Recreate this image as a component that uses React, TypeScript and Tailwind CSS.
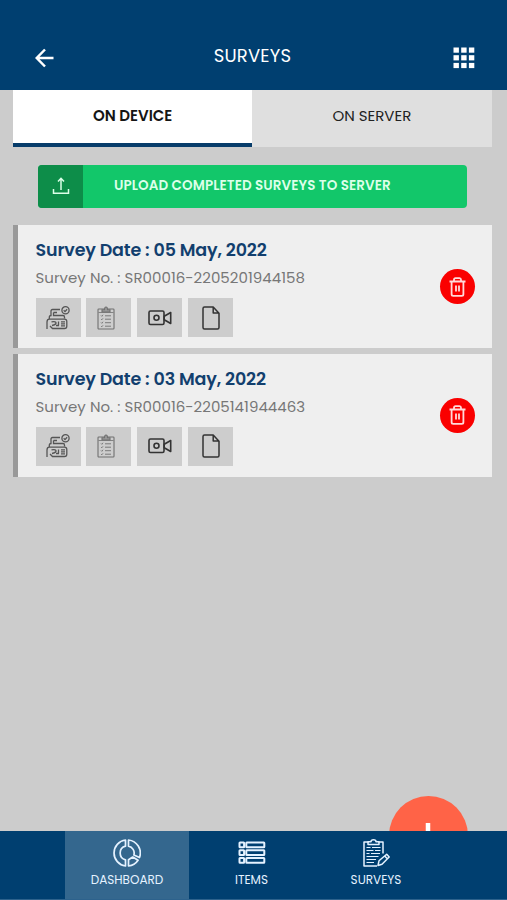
import type { ReactNode } from 'react'

const surveys = [
  { date: '05 May, 2022', number: 'SR00016-2205201944158' },
  { date: '03 May, 2022', number: 'SR00016-2205141944463' },
]

function BackIcon() {
  return (
    <svg width="20" height="20" viewBox="0 0 20 20" fill="none" stroke="currentColor" strokeWidth="2.5">
      <path d="M18.5 10H2M10 1.5 1.7 10l8.3 8.5" />
    </svg>
  )
}

function GridIcon() {
  return (
    <svg width="22" height="22" viewBox="0 0 22 22" fill="currentColor">
      {[0.5, 8.2, 15.9].map((y) =>
        [0.5, 8.2, 15.9].map((x) => <rect key={`${x}-${y}`} x={x} y={y} width="5.4" height="5.2" />),
      )}
    </svg>
  )
}

function UploadIcon() {
  return (
    <svg width="18" height="18" viewBox="0 0 18 18" fill="none" stroke="currentColor" strokeWidth="1.5">
      <path d="M1.5 12v4.2h15V12M9 13V1.5M6 4.5l3-3.2 3 3.2" />
    </svg>
  )
}

function AgreementIcon() {
  return (
    <svg width="24" height="24" viewBox="0 0 24 24" fill="none" stroke="#555" strokeWidth="1.3">
      <circle cx="19.5" cy="4.3" r="3.6" />
      <path d="m17.7 4.3 1.3 1.3 2.1-2.4" />
      <path d="M14 3.5H6.500Q5 3.500 5 5v4.500Q3.300 9.500 3.300 11.500V13M7.500 6.500H11M7.500 6.500v3h9.500q1.500 0 1.500 1.500v1.500" />
      <path d="M1 23v-7q0-2.800 2.500-2.800h15q2.300 0 2.300 2.300v4.700q0 2.300-2.300 2.300H6.500L4 20" />
      <path d="M5.500 15.800q5-.8 4.500 1.500-.5 1.700-4 2.200M12.500 15.500v4M10 19.500h3M15 15.800h4M15 17.800h4M15 19.800h4" />
    </svg>
  )
}

function ChecklistIcon() {
  return (
    <svg width="18" height="24" viewBox="0 0 18 24" fill="none" stroke="#707070" strokeWidth="1.100">
      <rect x="1" y="3" width="16" height="20" rx="0.8" />
      <path d="M1.500 6.500h15" strokeWidth="0.800" />
      <path d="M5 6V3.800h2.500Q7.500 1 9 1t1.500 2.800H13V6z" fill="#999" />
      <path d="m4 9.500.8.8L6 8.800M4 13l.8.8L6 12.300M4 16.500l.8.8L6 15.800M4 20l.8.8L6 19.300M8 9.800h6M8 13.200h6M8 16.700h6M8 20.200h6" strokeWidth="0.900" />
    </svg>
  )
}

function VideoIcon() {
  return (
    <svg width="24" height="16" viewBox="0 0 24 16" fill="none" stroke="#333" strokeWidth="1.600" strokeLinejoin="round">
      <rect x="1" y="1" width="15" height="13.500" rx="1.500" />
      <circle cx="8.500" cy="7.800" r="2.500" />
      <path d="M16.200 6.300 22.700 2.500v11l-6.500-3.800z" />
    </svg>
  )
}

function FileIcon() {
  return (
    <svg width="18" height="24" viewBox="0 0 18 24" fill="none" stroke="#333" strokeWidth="1.500" strokeLinejoin="round">
      <path d="M2.500 1h8.700L17 7.200V21.500Q17 23 15.500 23h-13Q1 23 1 21.500v-19Q1 1 2.500 1zM11.200 1v6H17" />
    </svg>
  )
}

function TrashIcon() {
  return (
    <svg width="17" height="20" viewBox="0 0 17 20" fill="none" stroke="currentColor" strokeWidth="1.800">
      <path d="M.5 4.500h16M5 4.200V2.800Q5 1.200 6.500 1.200h4q1.500 0 1.500 1.600V4.200M2.600 4.700v12.500q0 1.600 1.600 1.600h8.600q1.600 0 1.600-1.600V4.700M7 8.500v6M10 8.500v6" />
    </svg>
  )
}

function DashboardIcon() {
  return (
    <svg width="28" height="28" viewBox="0 0 28 28" fill="none" stroke="currentColor" strokeWidth="1.700" strokeLinejoin="round">
      <path d="M12.500 1v6.200a7 7 0 0 0 0 13.600V27A13.100 13.100 0 0 1 12.500 1z" />
      <path d="M15.500 1v6.200a7 7 0 0 1 5.400 8.800l5.600 2.500A13.100 13.100 0 0 0 15.500 1z" />
      <path d="M15.500 27v-6.200l4.200-2.800 5.400 3.300A13.500 13.500 0 0 1 15.500 27z" />
    </svg>
  )
}

function ItemsIcon() {
  return (
    <svg width="28" height="24" viewBox="0 0 28 24" fill="none" stroke="currentColor" strokeWidth="2">
      {[1.500, 9.200, 16.900].map((y) => (
        <g key={y}>
          <rect x="1.500" y={y} width="4.600" height="4.800" rx=".5" />
          <rect x="8.300" y={y} width="18" height="4.800" rx=".5" />
        </g>
      ))}
    </svg>
  )
}

function SurveysIcon() {
  return (
    <svg width="28" height="28" viewBox="0 0 28 28" fill="none" stroke="currentColor" strokeWidth="1.500" strokeLinejoin="round">
      <path d="M6.500 3H2v24h13M16.500 3H21v11.500" />
      <path d="M6 5.500V2.800h3q0-2 2.500-2t2.500 2h3v2.700z" />
      <path d="M4.500 8.500h4M10 8.500h8.500M4.500 11.500h7M13 11.500h5.500M4.500 14.500h3M9 14.500h9M4.500 17.500h12M4.500 20.500h9.500M4.500 23.500h7.500" strokeWidth="1.200" />
      <path d="m16 26.500 1-4.700 7.700-6.600 2.500 2.800-7.200 7.200zM22.700 16.900l2.600 2.800" />
    </svg>
  )
}

function ActionButton({ children }: { children: ReactNode }) {
  return (
    <button className="flex h-full w-[45px] items-center justify-center bg-[#cdcdcd]">
      {children}
    </button>
  )
}

function SurveyCard({ date, number }: { date: string; number: string }) {
  return (
    <article className="flex h-[123px] items-center justify-between border-l-[5px] border-[#999] bg-[#efefef] pr-[16.500px] pl-[17.500px]">
      <div className="flex h-full flex-col pt-[11px] whitespace-nowrap">
        <h2 className="h-[28px] text-[17.500px] leading-[28px] font-semibold tracking-[-0.160px] text-[#123f6e]">
          Survey Date : {date}
        </h2>
        <p className="h-[28px] text-[15px] leading-[28px] tracking-[0.030px] text-[#777]">
          Survey No. : {number}
        </p>
        <div className="mt-[6px] flex h-[39px] gap-[5.800px]">
          <ActionButton><AgreementIcon /></ActionButton>
          <ActionButton>
            <span className="pr-[5px]"><ChecklistIcon /></span>
          </ActionButton>
          <ActionButton>
            <span className="pl-px"><VideoIcon /></span>
          </ActionButton>
          <ActionButton>
            <span className="pl-px"><FileIcon /></span>
          </ActionButton>
        </div>
      </div>
      <button className="flex size-[35px] items-center justify-center rounded-full bg-[#fa0000] text-[#ffdada]">
        <TrashIcon />
      </button>
    </article>
  )
}

function NavItem({ label, active, children }: { label: string; active?: boolean; children: ReactNode }) {
  return (
    <a
      href="#"
      className={`flex w-[124.500px] flex-col items-center pt-2 ${active ? 'bg-[#34678e]' : ''}`}
    >
      <span className="flex h-7 items-center">{children}</span>
      <span className="mt-[4px] text-[12px] leading-[18px]">{label}</span>
    </a>
  )
}

export default function App() {
  return (
    <div className="relative flex h-[900px] w-[507px] flex-col overflow-hidden bg-[#ccc] font-['Poppins','Inter',sans-serif]">
      <header className="flex h-[90px] shrink-0 items-center justify-between bg-[#003f70] pt-[26px] pr-8 pl-[35px] text-white">
        <BackIcon />
        <h1 className="-mt-[4px] mr-[3px] text-[18px] leading-6 tracking-[0.200px]">SURVEYS</h1>
        <GridIcon />
      </header>

      <main className="flex flex-1 flex-col pr-[15.500px] pl-[13px]">
        <div className="grid h-[56.500px] grid-cols-2 text-[15px]">
          <button className="border-b-4 border-[#073c6a] bg-white pb-px font-semibold text-[#151515]">ON DEVICE</button>
          <button className="bg-[#dfdfdf] pb-[5px] text-[#222]">ON SERVER</button>
        </div>

        <button className="mt-[18.500px] mr-[25px] ml-[25px] flex h-[42.500px] overflow-hidden rounded bg-[#12c76a] text-[#dcffe9]">
          <span className="flex h-full w-[45px] items-center justify-center bg-[#0d8d49]">
            <UploadIcon />
          </span>
          <span className="pl-[31px] text-[13.500px] leading-[41px] font-semibold tracking-[0.090px]">UPLOAD COMPLETED SURVEYS TO SERVER</span>
        </button>

        <section className="mt-[17.500px] flex flex-col gap-[5.500px]">
          {surveys.map((survey) => (
            <SurveyCard key={survey.number} date={survey.date} number={survey.number} />
          ))}
        </section>
      </main>

      <button className="absolute top-[796px] left-[388.500px] flex size-[79px] justify-center rounded-full bg-[#ff6347] pt-[27px] text-white">
        <svg width="26" height="26" viewBox="0 0 26 26" stroke="currentColor" strokeWidth="4.500">
          <path d="M13 0v26M0 13h26" />
        </svg>
      </button>

      <nav className="relative flex h-[69px] shrink-0 justify-center border-b border-[#2d628c] bg-[#003f70] pr-[4px] text-[#e5f2ff]">
        <NavItem label="DASHBOARD" active><DashboardIcon /></NavItem>
        <NavItem label="ITEMS"><ItemsIcon /></NavItem>
        <NavItem label="SURVEYS"><SurveysIcon /></NavItem>
      </nav>
    </div>
  )
}
